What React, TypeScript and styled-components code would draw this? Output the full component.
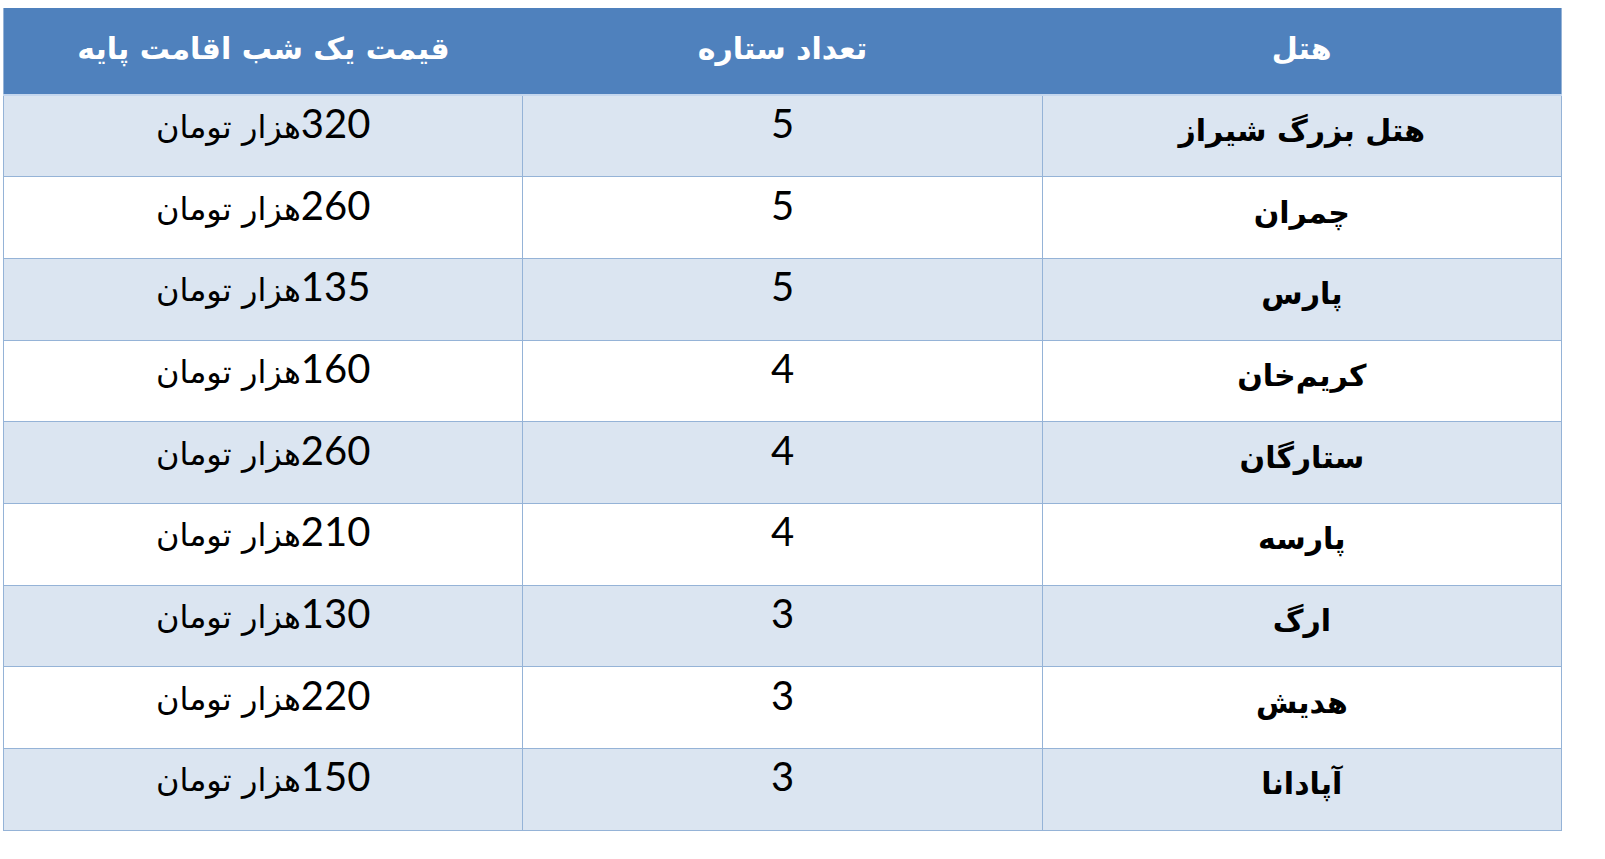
import React from "react";
import styled, { createGlobalStyle } from "styled-components";

const Global = createGlobalStyle`
  html, body { margin: 0; padding: 0; background: #ffffff; }
  body { font-family: "DejaVu Sans", sans-serif; }
`;

const Page = styled.div`
  padding: 8px 43px 0 3px;
`;

const Table = styled.table`
  direction: rtl;
  width: 1559px;
  border-collapse: collapse;
  table-layout: fixed;
  border: 1px solid #95b3d7;
  border-top: none;
`;

const HeadCell = styled.th`
  height: 80px;
  padding: 0 0 6px;
  background: #4f81bd;
  color: #ffffff;
  font-family: "DejaVu Sans", sans-serif;
  font-weight: bold;
  font-size: 30px;
  text-align: center;
  vertical-align: middle;
  border-bottom: 2px solid #c5d7ee;
  box-shadow: inset 0 -1px 0 #4f81bd;
`;

const Row = styled.tr<{ $banded: boolean }>`
  background: ${(p) => (p.$banded ? "#dbe5f1" : "#ffffff")};
`;

const Cell = styled.td<{ $bold?: boolean }>`
  height: 81.7px;
  padding: ${(p) => (p.$bold ? "0 0 10px" : "0 0 26px")};
  box-sizing: border-box;
  text-align: center;
  vertical-align: middle;
  color: #000000;
  border: 1px solid #95b3d7;
  font-family: ${(p) => (p.$bold ? `"DejaVu Sans", sans-serif` : `"Lato", "DejaVu Sans", sans-serif`)};
  font-weight: ${(p) => (p.$bold ? "bold" : "normal")};
  font-size: ${(p) => (p.$bold ? "30px" : "40px")};
  line-height: 1.2;
`;

const Price = styled.span`
  font-family: "Lato", sans-serif;
  font-size: 40px;
`;

const Unit = styled.span`
  font-family: "DejaVu Sans", sans-serif;
  font-size: 32px;
`;

const rows = [
  ["هتل بزرگ شیراز", "5", "320"],
  ["چمران", "5", "260"],
  ["پارس", "5", "135"],
  ["کریم‌خان", "4", "160"],
  ["ستارگان", "4", "260"],
  ["پارسه", "4", "210"],
  ["ارگ", "3", "130"],
  ["هدیش", "3", "220"],
  ["آپادانا", "3", "150"],
];

export default function App() {
  return (
    <>
      <Global />
      <Page>
        <Table>
          <thead>
            <tr>
              <HeadCell>هتل</HeadCell>
              <HeadCell>تعداد ستاره</HeadCell>
              <HeadCell>قیمت یک شب اقامت پایه</HeadCell>
            </tr>
          </thead>
          <tbody>
            {rows.map(([name, stars, price], i) => (
              <Row key={i} $banded={i % 2 === 0}>
                <Cell $bold>{name}</Cell>
                <Cell>{stars}</Cell>
                <Cell>
                  <Price>{price}</Price>
                  <Unit>هزار تومان</Unit>
                </Cell>
              </Row>
            ))}
          </tbody>
        </Table>
      </Page>
    </>
  );
}
